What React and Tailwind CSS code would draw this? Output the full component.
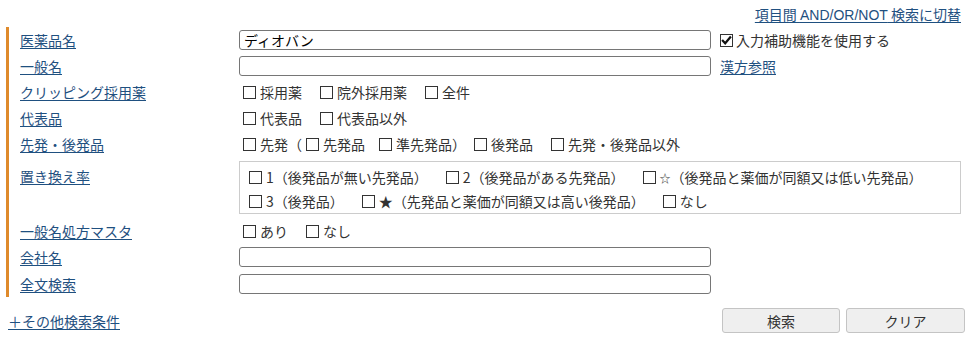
const Box = ({ checked }) => (
  <span className="inline-flex items-center justify-center w-[13px] h-[13px] border border-[#333] bg-white shrink-0">
    {checked && (
      <svg className="w-[11px] h-[11px]" viewBox="0 0 12 12" fill="none">
        <path d="M2 6.2l2.6 2.8L10 2.6" stroke="#111" strokeWidth={2.4} strokeLinecap="square" />
      </svg>
    )}
  </span>
);

const Check = ({ label, checked, className = '' }) => (
  <label className={`inline-flex items-center ${className}`}>
    <span className="ml-[4px] mr-[4px] flex"><Box checked={checked} /></span>
    <span>{label}</span>
  </label>
);

const Label = ({ children, top }) => (
  <div className={`w-[230px] pl-[11px] shrink-0 ${top ? 'self-start pt-[9px]' : ''}`}>
    <a href="#" className="text-[#1f5080] underline underline-offset-[2px]">{children}</a>
  </div>
);

const Input = ({ value = '' }) => (
  <div className="w-[472px] h-[20px] border border-[#767676] rounded-[3px] px-[4px] flex items-center text-black leading-none">
    {value}
  </div>
);

const App = () => {
  return (
    <div
      className="w-[970px] h-[340px] bg-white text-[14px] leading-[20px] text-[#333]"
      style={{ fontFamily: '"Noto Sans CJK JP", "Noto Sans", sans-serif' }}
    >
      {/* Top toggle link */}
      <div className="h-[27px] flex justify-end pr-[9px] pt-[4px]">
        <a href="#" className="text-[#1f5080] underline underline-offset-[2px]">
          項目間 <span className="font-['Liberation_Sans']">AND/OR/NOT</span> 検索に切替
        </a>
      </div>

      {/* Conditions */}
      <div className="ml-[6px] border-l-[3px] border-[#df8a2b]">
        <div className="flex items-center h-[26px]">
          <Label>医薬品名</Label>
          <Input value="ディオバン" />
          <label className="inline-flex items-center ml-[9px]">
            <Box checked />
            <span className="ml-[3px]">入力補助機能を使用する</span>
          </label>
        </div>

        <div className="flex items-center h-[26px]">
          <Label>一般名</Label>
          <Input />
          <a href="#" className="ml-[9px] text-[#1f5080] underline underline-offset-[2px]">漢方参照</a>
        </div>

        <div className="flex items-center h-[26px]">
          <Label>クリッピング採用薬</Label>
          <div className="flex items-center gap-[14px]">
            <Check label="採用薬" />
            <Check label="院外採用薬" />
            <Check label="全件" />
          </div>
        </div>

        <div className="flex items-center h-[26px]">
          <Label>代表品</Label>
          <div className="flex items-center gap-[14px]">
            <Check label="代表品" />
            <Check label="代表品以外" />
          </div>
        </div>

        <div className="flex items-center h-[26px]">
          <Label>先発・後発品</Label>
          <div className="flex items-center">
            <Check label="先発（" />
            <Check label="先発品" className="mr-[10px]" />
            <Check label="準先発品）" className="mr-[4px]" />
            <Check label="後発品" className="mr-[14px]" />
            <Check label="先発・後発品以外" />
          </div>
        </div>

        <div className="flex h-[61px] items-center">
          <Label top>置き換え率</Label>
          <div className="w-[722px] h-[53px] border border-[#ccc] pl-[5px] pt-[3px] flex flex-col">
            <div className="flex items-center h-[24px] gap-[14px]">
              <Check label="1（後発品が無い先発品）" />
              <Check label="2（後発品がある先発品）" />
              <Check label={<><span className="text-[11px]">☆</span>（後発品と薬価が同額又は低い先発品）</>} />
            </div>
            <div className="flex items-center h-[24px] gap-[14px]">
              <Check label="3（後発品）" />
              <Check label="★（先発品と薬価が同額又は高い後発品）" />
              <Check label="なし" />
            </div>
          </div>
        </div>

        <div className="flex items-center h-[26px]">
          <Label>一般名処方マスタ</Label>
          <div className="flex items-center gap-[14px]">
            <Check label="あり" />
            <Check label="なし" />
          </div>
        </div>

        <div className="flex items-center h-[26px]">
          <Label>会社名</Label>
          <Input />
        </div>

        <div className="flex items-center h-[27px]">
          <Label>全文検索</Label>
          <Input />
        </div>
      </div>

      {/* Footer */}
      <div className="flex items-start justify-between pl-[8px] pr-[5px] pt-[11px]">
        <a href="#" className="text-[#1f5080] underline underline-offset-[2px] mt-[3px]">＋その他検索条件</a>
        <div className="flex gap-[6px]">
          <button className="w-[118px] h-[25px] bg-[#efefef] border border-[#c4c4c4] rounded-[3px] text-[#333] leading-none">検索</button>
          <button className="w-[119px] h-[25px] bg-[#efefef] border border-[#c4c4c4] rounded-[3px] text-[#333] leading-none">クリア</button>
        </div>
      </div>
    </div>
  );
};

export default App;
